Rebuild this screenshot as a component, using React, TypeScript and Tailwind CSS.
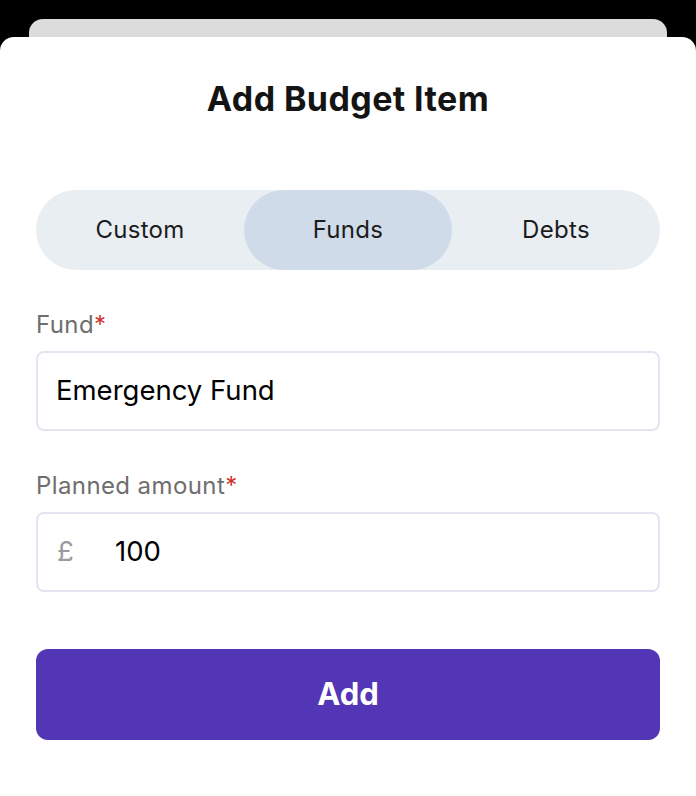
import React, { useState } from "react";

const TABS = ["Custom", "Funds", "Debts"] as const;
type Tab = (typeof TABS)[number];

const Label: React.FC<{ text: string }> = ({ text }) => (
  <p className="text-[24px] leading-none tracking-[0.4px] text-[#6e6e6e]">
    {text}
    <span className="text-[#d0342c]">*</span>
  </p>
);

export default function App() {
  const [tab, setTab] = useState<Tab>("Funds");

  return (
    <div
      className="relative h-[796px] w-[696px] overflow-hidden bg-black"
      style={{ fontFamily: "Inter, 'Liberation Sans', sans-serif" }}
    >
      {/* card peeking behind the sheet */}
      <div className="mx-[29px] mt-[19px] h-[40px] rounded-t-[14px] bg-[#dcdcdc]" />

      {/* sheet */}
      <div className="absolute inset-x-0 top-[37px] bottom-0 rounded-t-[14px] bg-white px-9">
        <h1 className="pt-[45px] text-center text-[34px] font-bold leading-none tracking-[0.4px] text-[#141414]">
          Add Budget Item
        </h1>

        <div className="mt-[74px] flex h-20 rounded-full bg-[#e9eef3]">
          {TABS.map((t) => (
            <button
              key={t}
              type="button"
              onClick={() => setTab(t)}
              className={`flex-1 rounded-full text-[24px] tracking-[0.3px] text-[#1c1c1c] ${
                tab === t ? "bg-[#cfdbe8]" : ""
              }`}
            >
              {t}
            </button>
          ))}
        </div>

        <div className="mt-[43px]">
          <Label text="Fund" />
          <div className="mt-[14px] flex h-20 items-center rounded-[8px] border-2 border-[#e3e5f1] px-[18px] text-[27.5px] text-black">
            Emergency Fund
          </div>
        </div>

        <div className="mt-[43px]">
          <Label text="Planned amount" />
          <div className="mt-[14px] flex h-20 items-center rounded-[8px] border-2 border-[#e3e5f1] px-[19px] text-[27.5px]">
            <span className="w-[58px] text-[#9a9aa0]">£</span>
            <span className="text-black">100</span>
          </div>
        </div>

        <button
          type="button"
          className="mt-[57px] flex h-[91px] w-full items-center justify-center rounded-[12px] bg-[#5336b5] text-[31px] font-bold text-white"
        >
          Add
        </button>
      </div>
    </div>
  );
}
